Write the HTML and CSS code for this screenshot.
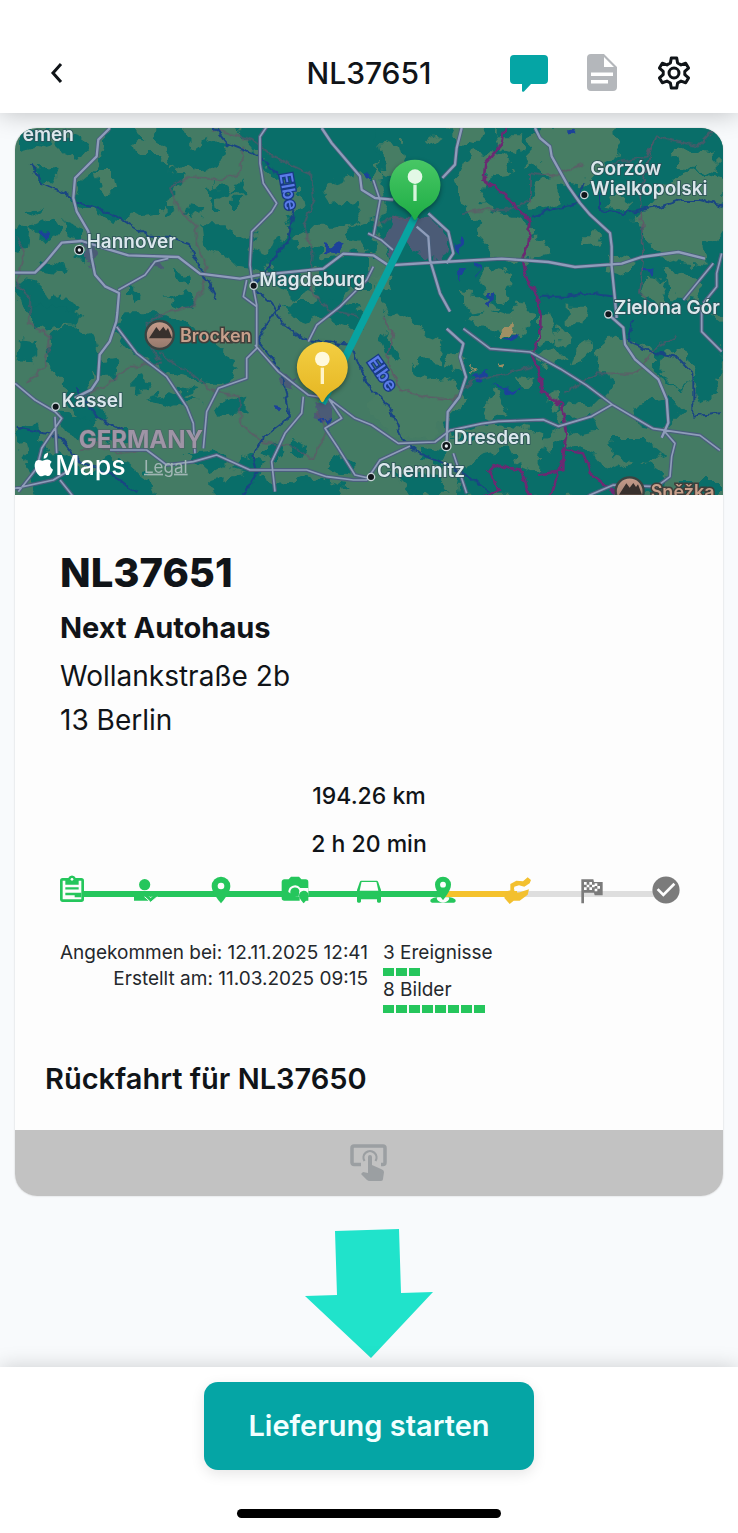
FILE: index.html
```html
<!DOCTYPE html>
<html lang="de">
<head>
<meta charset="utf-8">
<meta name="viewport" content="width=device-width, initial-scale=1">
<title>NL37651</title>
<link rel="stylesheet" href="styles.css">
</head>
<body>
<header class="topbar">
  <button class="icon-button" type="button" aria-label="Zurück">
    <svg width="20" height="24" viewBox="0 0 20 24"><path class="chevron" d="M15 3 7 12l8 9"/></svg>
  </button>
  <p class="topbar-title">NL37651</p>
  <div class="topbar-actions">
    <button class="icon-button" type="button" aria-label="Nachrichten">
      <svg width="38" height="38" viewBox="0 0 38 38"><path fill="#05a5a5" d="M4 1h30a4 4 0 0 1 4 4v21a4 4 0 0 1-4 4h-13l-7 7.500q-2 1-2-1V30H4a4 4 0 0 1-4-4V5a4 4 0 0 1 4-4z"/></svg>
    </button>
    <button class="icon-button" type="button" aria-label="Dokument">
      <svg width="30" height="38" viewBox="0 0 30 38"><path fill="#b4b7bb" fill-rule="evenodd" d="M4 0h13l13 13v20a4 4 0 0 1-4 4H4a4 4 0 0 1-4-4V4a4 4 0 0 1 4-4zm13 3v10h10zM4 18.500v3.500h22v-3.500zM4 26v3.500h17V26z"/></svg>
    </button>
    <button class="icon-button" type="button" aria-label="Einstellungen">
      <svg width="36" height="36" viewBox="0 0 24 24"><path class="gear" d="M10.200 2h3.600l.6 3.300 2.300 1.300 3.100-1.100 1.900 3.200-2.500 2.200v2.200l2.500 2.200-1.900 3.200-3.100-1.100-2.300 1.300-.6 3.300h-3.600l-.6-3.300-2.300-1.300-3.100 1.100-1.900-3.200 2.500-2.200v-2.200L2.300 8.700l1.900-3.200 3.100 1.100 2.300-1.300z"/><circle class="gear" cx="12" cy="12" r="3.300"/></svg>
    </button>
  </div>
</header>

<main class="content">
  <article class="card">
    <svg class="map" viewBox="45 24 2124 1101" preserveAspectRatio="xMidYMid slice" role="img" aria-label="Karte der Route">
      <defs>
        <filter id="ragged" x="0" y="0" width="100%" height="100%" color-interpolation-filters="sRGB">
          <feTurbulence type="fractalNoise" baseFrequency="0.03" numOctaves="2" seed="4" result="n"/>
          <feDisplacementMap in="SourceGraphic" in2="n" scale="50" xChannelSelector="R" yChannelSelector="G"/>
        </filter>
        <filter id="wavy" x="0" y="0" width="100%" height="100%" color-interpolation-filters="sRGB">
          <feTurbulence type="fractalNoise" baseFrequency="0.04" numOctaves="2" seed="9" result="n"/>
          <feDisplacementMap in="SourceGraphic" in2="n" scale="22" xChannelSelector="R" yChannelSelector="G"/>
        </filter>
        <linearGradient id="pinGreen" x1="0" y1="0" x2="0" y2="1"><stop offset="0" stop-color="#48c765"/><stop offset="1" stop-color="#1ead45"/></linearGradient>
        <linearGradient id="pinYellow" x1="0" y1="0" x2="0" y2="1"><stop offset="0" stop-color="#f3ce42"/><stop offset="1" stop-color="#e5b622"/></linearGradient>
        <linearGradient id="peak" x1="0" y1="0" x2="0" y2="1"><stop offset="0" stop-color="#c69c8b"/><stop offset="1" stop-color="#94786b"/></linearGradient>
        <path id="motorways" d="M330 24l-35 35-5 50-65 65-5 60 10 40 35 60 10 80 10 50 30 35 42 20-5 60-3 25-20 60-30 40-5 75-20 30-50 25M45 458l60 0 30-30 50-60 60-5 80 25 60 18 150 5 65 50 120 15 50-10 200-20 60-45 90 5 45 30 160-10 180-10 140 10 80 15 140-10 60-20 110-15 80 20M965 24l30 45 85 100 5 40 40 25 55 5M1385 24l-15 60-5 50-38 40M1605 24l15 30 30 25 5 30 50 90 35 50 30 35 60 55 5 40 0 60 10 100 5 55M1825 583l45 40 5 50 30 45 70 60 25 60 5 70-20 45M1285 280l60 55 15 65-20 30M1250 320l35 30 5 70 30 100 30 55M1340 626l50 45-10 40 18 60-20 60-35 45-3 90"/>
        <path id="highways" d="M1390 626l80 60 120 10 90 50 80 50 80 60 120 70 140 20 60 45M350 620l60 80 90 70 60 90 20 50 5 90M610 985l10-110 35-70 85-30 0-60 30-30 0-130-15-80-5-40 5-100 60-60 15-25-40-60-10-60 0-80 30-45-30-60M765 675l70 80 90 70 60 10 80 60 50 20 80 55 110-4 45-35 95-20 50-7 135-5 45 20 100-30 60-35M985 835l40 60-50 30 40 60 50 80 45 10M910 830l-5 50-50 60-40 85 10 90M330 990l110 0 60 45 80-10 70-20 100 45 170 0 60 20 80 10 40 0 40-60 90-42M45 790l60 50 60 35 20 20-60 90-15 60-55 70M165 890l5 110M45 1105l115-25 50-30M180 1080l40 50M355 510l80-45 30-40 40-10M740 480l-10 50 40 30M1360 1000l20 60 20 60M1990 930l35 40-10 40-5 60-40 30-130-5-70 30-40 30-10 30M2165 400l-15 60 0 40-40 50M2105 555l0 80 60 60M925 665l25-50 70-55 80-80 20-40M1104 340l40 20 35 30M1120 180l20 60-20 110M2140 430l-90 110"/>
      </defs>
      <rect x="-20" y="-20" width="2300" height="1240" fill="#447b64"/>
      <g filter="url(#ragged)">
        <g fill="#096e69">
          <path d="M345 0 315 60l-20 80-60 50-15 70 60 0 60 50 60-25 80-10 30-30 20-50 30-20-60-40-30-30-60 0-10-30 30-20-50-50 10-45zM480 20l60 0 40 60 60-20 40 20-20 50-50 30-50-20-50 20-10-80-50-30zM60 30l90 0-10 40-80 20zM170 30l60 20 40 30-30 40-50-20-30-30zM110 140l60 10-10 30-40 10z"/>
          <path d="M690 0l700 0 0 150-200-20-60 60-60-30-60 20-50 40-50-20-80-10-60-90z"/>
          <path d="M900 160l50 30 40 60 80-10 20 60-80 20-70 0-60 30-20-60 50-30-10-50zM610 220l60-30 20 30-40 20zM640 180l20 90-20 0zM690 230l40 0-10 40-30 0zM570 250l40 10-10 30-40-10zM720 180l20 40-50 0zM610 310l60 0 40 40 60-10-20 50 60 20-20 40-80-10-30-30-60-20zM500 250l30 20-30 20z"/>
          <path d="M830 360l50-30 20 50 60 0 20 50-60 20-40 40 60 20-50 30-70-50-20-60zM1040 320l90-20 0 100-50-20zM960 420l150-30 0 120-60 0-60 60-50-50z"/>
          <path d="M50 310l40 10-10 60-40 10zM90 320l70-30 15 50-40 30zM80 280l50-20-30 30zM190 300l50 20 20 50-60-20zM230 380l40 20-10 30-30-20zM120 420l80 20-10 20-60-10zM50 480l60 10 40 50 30-20 60 40-30 40-70-40-60 20-20-40zM510 440l60 30-10 30-40-20zM390 490l30 30-10 30-20-30z"/>
          <path d="M70 560l120 0 60 30-40 30-50-10-50 20zM60 660l60 10-20 60-50-10zM150 630l80-10 50 40 20 70-40 60 20 60 40 30-60 40-50-60-20-70-50-60z"/>
          <path d="M380 580l110 0 100 50 70 40 50 80-20 40-100-10-90-20-70-50-60-20-30-60zM500 530l60-20 40 40-60 20zM400 780l30-10 20 40-50 10zM430 840l80-20 90 20-80 20zM530 800l60 10-50 20zM650 850l90-20 0 50-80 10zM290 720l60-10-10 60-50 0z"/>
          <path d="M50 920l60 0 30 80 50 0 60 60 80-50 60 20 60 50 20 70-360 0zM170 880l80 10 60 40 90 0-20 40-80-10-40 10-60-30zM560 1000l90-10 40 40-60 30zM720 1000l80 20-30 50-70-20zM630 1080l120-20 80 30 80-20 130 30-20 40-380 0zM810 970l50 20-30 30-50-20zM840 550l120-10 100 10 40 60-40 20-100-40-60 20zM880 960l50 20-20 40-40-20zM1000 1000l70 30-30 30-60-20z"/>
          <path d="M1110 0h1100v580l-180 0-130 80-90 50 30 90-60 60-90-10-30 100-80 20-100-30-60 20-70-10-20-50-60 10-30-50-50-60 40-30-60-50-30-60 40-60-60-100 50-70-40-100 30-80z"/>
          <path d="M1860 640l100-80 140 0 80 60-20 150-70-30-40 80-90-70zM1900 860l110-30 40 40-60 60-70-10zM1680 900l100-10 20 40-90 20zM1460 1000l170-30 30 80-30 80-260 0 10-80zM1660 960l130 40 40 50 90-30 80 50-20 60-400 0 20-80zM1830 960l110 0 50 40-70 30-80-20zM1270 980l80 10-20 50-70-20zM1170 1060l120-10 60 70-100 10zM2050 720l100 40 10 60-60 30zM2040 1080l120 0 0 50-130 0z"/>
        </g>
        <g fill="#477d64">
          <path d="M290 150l40 0 10 60-30 10zM1140 60l60 10 20 70 0 60-70-40zM1280 40l40 20-30 20zM1340 10l120 0-20 50-60 20zM1420 90l100 20 20 50-80 10-20 70 60 50-60 20-50-50-20-80zM1620 20l220 0 20 80-50 30-60 70-90-10-50-60-30 10 0-60zM1480 40l90 0-10 60-60-10z"/>
          <path d="M1450 260l110 30 50 40-30 100-90-10-60-80zM1610 180l60-10 10 80-90 20zM1980 200l90-50 100 30 0 160-60 30 10 70-90-10-60-40-70-90 60-50zM1830 220l70 20-30 30-50-10zM1750 340l60 0-10 30-50 10zM1560 350l70 0 20 50-80 20zM1450 440l90 20-20 90-70-40zM1380 520l90 20 30 30-90 10zM1130 470l60-10-20 50-50 10zM1130 130l30 50-50 10zM2000 450l110 30-20 60-80-10zM1830 410l80 20-30 40-60-20zM1930 470l70 10-20 70-60-20zM2020 80l130 20 0 60-110-20z"/>
          <path d="M1160 600l60-20 60 60-20 100-60-30-40-60zM1250 640l80 30-10 60-60-10zM1130 700l100 20 40 60 80-10 50 70-60 60-60 70-100-20-70-80zM1400 600l60-30 60 20 40-50 40 50-40 60-80-20zM1620 580l30 0 20 80-50 10zM1670 620l50 30-20 30-40-10zM1720 700l50-40-10 60-50 10zM1780 700l60-50 80 20 50 50-50 40-120 0zM1550 770l60 10-40 30zM1440 860l50-50 30 70-50 30zM1590 700l80-20 30 40-60 20zM1350 700l50 10-20 40-50-10zM1990 700l60-20 40 80-50 50-60-60z"/>
          <path d="M1330 950l100-40 110 10 90 20-10 110-70-20-30-60-100-30zM1700 560l60 0-10 50-50 0zM1640 830l30-20 10 60-30 10z"/>
        </g>
        <path fill="#a09064" d="M1508 628l22-14 5-12 10 18-8 22-25 12zM1490 728l8 8 14-4-2 16-20-2zM1408 745l15 0-6 14z"/>
        <path fill="#4b5b76" d="M1180 290l100 0 70 70-20 60-60-10-60-40-40 50-20-60zM255 370l35 30-15 40-25-30zM845 770l40 0-10 45-30-10zM940 840l50 10 0 60-40-10zM450 420l35 0-10 30-25-5z"/>
        <path fill="#1c429a" d="M115 345l35-15-10 30zM975 370l50 5-15 25-35-5zM1370 360l18-5-6 50-12-10zM1090 140l20 40-20-10zM1375 450l20 0-8 30zM1425 430l12 0-6 40zM1465 510l10 0-6 50-8-5zM815 855l40 5-20 15zM1525 650l25-8-6 25zM1410 770l60-15-15 25zM1480 795l80 15-10 15zM960 890l30 5-10 50zM1940 450l15 0-5 15zM1700 30l30 10-10 8z"/>
      </g>

      <g class="district" filter="url(#wavy)">
        <path d="M730 80l-10 80-60 20-90-10-60 30 20 60 60 60 0 60 30 60-10 60-30 60-90 20-50 30 0 50 40 60"/>
        <path d="M640 30l120 30 60 50 110 50 10 80-30 80 30 70-10 120 60 60 90 20"/>
        <path d="M50 350l20 50-20 100 40 30 0 80 60 40-10 80-60 60M480 700l90 60 60 50 90 20 0 80 70 60 90 10 60 40 40-90-30-60M480 730l-90 10-60 50-80 40"/>
        <path d="M1840 130l100-20 30-60 120 30 60-60M1380 280l80-10 70 0 60-30 0-80 70 10 90-40M1960 70l-40 140 10 200-10 110 50 40M1150 590l30 60-20 70 40 90 80 20 80 10 60-60 100-20 80-20M1690 820l100-60 120 0 60-80 60-30"/>
        <path d="M240 990l60-20 50 30 90-10M1120 320l60-30 70 20"/>
      </g>
      <g class="border" filter="url(#wavy)">
        <path d="M1516 20l-10 50-50 60-5 50 60 40 45 50 35 35-5 60-20 60 15 50 30 50 10 60 0 60-25 60 25 60 5 50 60 40 15 100-20 80-30 90-25 20-40-20-20-70-60-20-40 15 30 60-50 20-70 30-100 30"/>
        <path d="M1620 1060l70-10 0-60 60 10 20 60 40 30 40 30"/>
      </g>
      <g class="river" filter="url(#wavy)">
        <path d="M95 130l30 60 70 30 40 30 70 20 60 30 80 50 60 0 60 20 40 80 45 90M640 20l40 50 100 40 60 60 40 100-15 90-50 60-30 50-30 30 60 50 40 70 60 40 140 15 20 60 30 60 40 40 40 60 20 60 60 50 80 30 60 30 60 50"/>
        <path d="M770 660l50 60 30 60 20 110-80 60-30 50 10 60-50 80M840 555l-40 60-30 50M50 920l80 20 50 10 60 80 90 30 80 60M230 800l60 90 80 40"/>
        <path d="M1590 290l60-20 80-20 20-60M1800 220l0 50 70 10 110-20 60-20 60 0 80 20M1620 530l80 0 60-10 90 10M1900 600l-20 60 90 40 60 10 50 50 0 130 80-10"/>
      </g>
      <g class="casing"><use href="#motorways"/><use href="#highways"/></g>
      <g class="road"><use href="#motorways"/><use href="#highways" class="minor"/></g>

      <path d="M1245 290 967 850" stroke="#08a3a1" stroke-width="22" fill="none"/>

      <g class="city-dots">
        <circle cx="238" cy="390" r="14"/><circle cx="761" cy="497" r="11"/><circle cx="167" cy="860" r="11"/>
        <circle cx="1753" cy="225" r="11"/><circle cx="1825" cy="583" r="11"/><circle cx="1339" cy="978" r="14"/><circle cx="1113" cy="1071" r="11"/>
      </g>
      <circle cx="238" cy="390" r="5" fill="#eaf0f3"/><circle cx="1339" cy="978" r="5" fill="#eaf0f3"/>

      <g class="summit">
        <circle cx="479" cy="645" r="42"/><path d="M447 655l22-34 10 13 11-14 8 12 6-8 12 31z"/>
        <circle cx="1889" cy="1114" r="42"/><path d="M1857 1124l22-34 10 13 11-14 8 12 6-8 12 31z"/>
      </g>
      <g class="labels">
        <text x="68" y="62">emen</text>
        <text x="260" y="385">Hannover</text>
        <text x="778" y="497">Magdeburg</text>
        <text x="185" y="860">Kassel</text>
        <text x="1771" y="165">Gorzów</text>
        <text x="1771" y="225">Wielkopolski</text>
        <text x="1842" y="583">Zielona Gór</text>
        <text x="1361" y="971">Dresden</text>
        <text x="1131" y="1070">Chemnitz</text>
      </g>
      <g class="labels summit-labels"><text x="540" y="667">Brocken</text><text x="1952" y="1133">Sněžka</text></g>
      <text class="country" x="236" y="985">GERMANY</text>
      <g class="labels water-labels"><text transform="translate(838 162) rotate(80)">Elbe</text><text transform="translate(1100 725) rotate(55)">Elbe</text></g>

      <g class="pin">
        <path fill="url(#pinGreen)" d="M1245 119a76 76 0 0 1 38 142q-24 14-34 36-4 6-8 0-10-22-34-36a76 76 0 0 1 38-142z"/>
        <circle cx="1245" cy="170" r="22" fill="#e3f8e6"/><path d="M1245 194v49" stroke="#d6f4dc" stroke-width="10"/>
        <path fill="url(#pinYellow)" d="M967 666a76 76 0 0 1 38 142q-24 14-34 36-4 6-8 0-10-22-34-36a76 76 0 0 1 38-142z"/>
        <circle cx="967" cy="717" r="22" fill="#fff9dc"/><path d="M967 743v49" stroke="#fff4c8" stroke-width="10"/>
      </g>
      <path fill="#fff" d="M144 998q-14 2-13 18 14-1 13-18zm11 27q-10-11-23-4-5 2-10 0-18-6-18 18 2 20 15 29 5 2 11-1t12 1q10 2 17-19-15-12-4-24z"/>
      <text class="brand" x="166" y="1065">Maps</text>
      <a href="#legal"><text class="legal" x="432" y="1058">Legal</text></a>
    </svg>

    <div class="card-body">
      <section class="address">
        <h1 class="order-number">NL37651</h1>
        <h2 class="customer">Next Autohaus</h2>
        <p class="address-line">Wollankstraße 2b</p>
        <p class="address-line">13 Berlin</p>
      </section>

      <div class="trip">
        <p>194.26 km</p>
        <p>2 h 20 min</p>
      </div>

      <ol class="timeline">
        <li class="step done"><svg viewBox="0 0 24 24"><path d="M19 3h-4.200a3 3 0 0 0-5.600 0H5a2 2 0 0 0-2 2v14c0 1.100.9 2 2 2h14a2 2 0 0 0 2-2V5a2 2 0 0 0-2-2z"/><path fill="#fdfdfd" d="M5 5h2v3h10V5h2v14H5z"/><circle fill="#fdfdfd" cx="12" cy="4" r="1"/><path d="M7 10h10v1.700H7zm0 4h12v3.500h-5V16H7z"/></svg></li>
        <li class="step done"><svg viewBox="0 0 24 24"><circle cx="11" cy="8" r="4.200"/><path d="M3 16.500h7l4 3.500H3z"/><path stroke="#fdfdfd" stroke-width=".7" d="m10.500 16.500 2-1.400 3 2.500 3-2.500 2.500 1.400-5.500 4.700z"/><path d="M3 13h18v4H3z"/></svg></li>
        <li class="step done"><svg viewBox="0 0 24 24"><path d="M12 2a7 7 0 0 0-7 7c0 5.250 7 13 7 13s7-7.750 7-13a7 7 0 0 0-7-7z"/><circle fill="#fdfdfd" cx="12" cy="9" r="2.500"/></svg></li>
        <li class="step done"><svg viewBox="0 0 24 24"><path d="M9 2h6l1.800 2H20a2 2 0 0 1 2 2v14H4a2 2 0 0 1-2-2V6c0-1.100.9-2 2-2h3.200z"/><path fill="#fdfdfd" d="M7 13.500a5 5 0 0 1 9-3h6v5c0 2-3 5-3 5h-3.500V17H13z"/><path d="M8.500 13.200a3.500 3.500 0 0 1 6.800-.7l-.6 4.500H8.500zM18.500 12.500a3.700 3.700 0 0 0-3.500 3.700c0 2.300 3.500 5.800 3.500 5.800s3.700-3.500 3.700-5.800a3.700 3.700 0 0 0-3.700-3.700z"/></svg></li>
        <li class="step done"><svg viewBox="0 0 24 24"><path d="M18.900 6c-.2-.6-.8-1-1.400-1h-11c-.7 0-1.200.4-1.400 1L3 12v8.500c0 .6.400 1 1 1h1c.6 0 1-.4 1-1V19h12v1.500c0 .6.400 1 1 1h1c.6 0 1-.4 1-1V12z"/><path fill="#fdfdfd" d="M5 12.500 6.400 6h11.200l1.400 6.500z"/></svg></li>
        <li class="step done last-done"><svg viewBox="0 0 24 24"><path d="M7 17.500c-3 .5-4.500 1.500-4.500 2.500s1 1.500 2 1.500h15c1 0 2-.5 2-1.500s-1.500-2-4.500-2.500z"/><path fill="#fdfdfd" d="M8 17.500c-2 1 1 4 4 4s6-3 4-4z"/><path d="M12 2a6 6 0 0 0-6 6c0 4.500 6 11.500 6 11.500s6-7 6-11.500a6 6 0 0 0-6-6z"/><circle fill="#fdfdfd" cx="12" cy="8" r="2.200"/></svg></li>
        <li class="step current"><svg viewBox="0 0 24 24"><path d="M7 7.500 11.500 5l5 .5L20 2.500l2.500 2-1 2.500-4 2.500-4-1-3.500 1-.5 3H7z"/><path d="M10 11.500v2.300h3.500l7.500-2.300-1 4-6 4.500H9.500l-3 2.500L2.500 18 4 13z"/></svg></li>
        <li class="step open"><svg viewBox="0 0 24 24"><path d="M4 4h9l.5 2H20v10h-6l-.5-2H6v8H4z"/><path fill="#fdfdfd" d="M6 6h2v2H6zm4 0h2v2h-2zM8 8h2v2H8zm4 0h2v2h-2zm-6 2h2v2H6zm4 0h2v2h-2zm4-3h2v2h-2zm2 2h2v2h-2zm-2 2h2v2h-2z"/></svg></li>
        <li class="step open"><svg viewBox="0 0 24 24"><circle cx="12" cy="12" r="10.200"/><path fill="#fdfdfd" d="m10 17-5-5 1.400-1.400 3.600 3.600 7.600-7.600L19 8z"/></svg></li>
      </ol>

      <div class="facts">
        <div class="dates">
          <p>Angekommen bei: 12.11.2025 12:41</p>
          <p>Erstellt am: 11.03.2025 09:15</p>
        </div>
        <div class="counts">
          <p>3 Ereignisse</p>
          <div class="ticks"><i></i><i></i><i></i></div>
          <p>8 Bilder</p>
          <div class="ticks"><i></i><i></i><i></i><i></i><i></i><i></i><i></i><i></i></div>
        </div>
      </div>

      <p class="return-trip">Rückfahrt für NL37650</p>
    </div>

    <button class="tap-bar" type="button" aria-label="Auftrag öffnen">
      <svg width="38" height="38" viewBox="0 0 38 38"><path d="M11 20.500H4a2 2 0 0 1-2-2V4a2 2 0 0 1 2-2h29a2 2 0 0 1 2 2v14.500a2 2 0 0 1-2 2h-2" fill="none" stroke="#9b9fa2" stroke-width="3.500"/><path d="M14.500 17a6.500 6.500 0 1 1 11 0" fill="none" stroke="#9b9fa2" stroke-width="2.200"/><path fill="#9b9fa2" d="M18 13a2 2 0 0 1 4 0v8l9 4q3 1 3 3l-1 7q0 2-2 2H20q-2 0-3-1l-6-6 2-2 5 1z"/></svg>
    </button>
  </article>

  <svg class="arrow" width="128" height="129" viewBox="0 0 128 129" aria-hidden="true"><path fill="#20e3cb" d="M30 2 94 0l2 64 32-1-62 66L0 67l32-1z"/></svg>
</main>

<footer class="bottom-bar">
  <button class="primary" type="button">Lieferung starten</button>
  <div class="home-indicator"></div>
</footer>
</body>
</html>
```
FILE: styles.css
```css
* { box-sizing: border-box; }
body {
  margin: 0;
  min-height: 100vh;
  display: flex;
  flex-direction: column;
  background: #f8fafc;
  color: #101418;
  font-family: Inter, "Liberation Sans", sans-serif;
}
h1, h2, p, ol { margin: 0; padding: 0; }
button { border: 0; padding: 0; background: none; font: inherit; color: inherit; }
svg { display: block; }

.topbar {
  display: grid;
  grid-template-columns: 1fr auto 1fr;
  align-items: center;
  padding: 48px 46px 15px;
  background: #fff;
  box-shadow: 0 0 24px rgba(0, 0, 0, .25);
}
.topbar .icon-button { justify-self: start; }
.topbar-title { font-size: 30px; font-weight: 500; line-height: 50px; }
.topbar-actions { display: flex; align-items: center; justify-content: flex-end; gap: 39px; }
.chevron { fill: none; stroke: #101418; stroke-width: 3; }
.gear { fill: none; stroke: #101418; stroke-width: 2; stroke-linejoin: round; }

.content { flex: 1; display: flex; flex-direction: column; align-items: center; gap: 33px; padding: 15px 15px 8px; }
.card {
  width: 100%;
  overflow: hidden;
  border-radius: 22px;
  background: #fdfdfd;
  box-shadow: 0 0 2px rgba(0, 0, 0, .2);
}
.map { width: 100%; height: auto; aspect-ratio: 708 / 367; }
.district path { fill: none; stroke: #665269; stroke-width: 5; opacity: .75; }
.border path { fill: none; stroke: #6b2a72; stroke-width: 8; }
.river path { fill: none; stroke: #194583; stroke-width: 6; }
.casing { fill: none; stroke: #4a5f7c; stroke-width: 12; stroke-linejoin: round; }
.road { fill: none; stroke: #8f9dba; stroke-width: 7; stroke-linejoin: round; }
.minor { stroke-width: 5; }
.city-dots circle { fill: #10161b; stroke: #c7d4d8; stroke-width: 4; }
.labels text {
  font-size: 57px;
  font-weight: 600;
  fill: #dbe8ec;
  stroke: #2d5158;
  stroke-width: 5;
  paint-order: stroke;
}
.summit circle { fill: url(#peak); stroke: #3b4442; stroke-width: 7; }
.summit path { fill: #38302d; }
.labels.summit-labels text { font-size: 54px; fill: #c8a08c; stroke: #403f3b; stroke-width: 9; }
.labels.water-labels text { font-size: 54px; fill: #5a7be8; stroke: #183a86; stroke-width: 8; }
.country { font-size: 72px; font-weight: 700; fill: #9f94a6; stroke: #4c6667; stroke-width: 4; paint-order: stroke; }
.brand { font-size: 80px; font-weight: 500; fill: #fff; }
.legal { font-size: 51px; fill: #a0b6b4; text-decoration: underline; }
.pin { filter: drop-shadow(0 6px 8px rgba(0, 0, 0, .4)); }

.card-body { padding: 52px 20px 32px; }
.address { padding: 0 25px; }
.order-number { font-size: 40px; font-weight: 800; line-height: 52px; }
.customer { margin-top: 7px; margin-bottom: 4px; font-size: 29px; font-weight: 700; line-height: 44px; }
.address-line { font-size: 28px; line-height: 44px; }
.trip { margin-top: 30px; text-align: center; font-size: 23px; font-weight: 500; line-height: 48px; }

.timeline { display: flex; margin-top: 6px; list-style: none; }
.step { position: relative; flex: 1; display: flex; justify-content: center; color: #25c65c; }
.step svg { position: relative; width: 32px; height: 32px; fill: currentColor; }
.step::before {
  content: "";
  position: absolute;
  left: 50%;
  top: 17px;
  width: 100%;
  height: 6px;
  background: #25c65c;
}
.step.last-done::before { background: #f5c22d; }
.current { color: #f3c02f; }
.current::before, .open::before { background: #dedede; }
.open { color: #7b7b7b; }
.step:last-child::before { display: none; }

.facts { display: grid; grid-template-columns: 333px 1fr; gap: 15px; margin-top: 34px; font-size: 19px; line-height: 26px; color: #24282c; }
.dates { text-align: right; white-space: nowrap; }
.ticks { display: flex; gap: 2px; padding: 2px 0 1px; }
.ticks i { width: 11px; height: 8px; background: #25c65c; }
.return-trip { margin-top: 46px; padding: 0 10px; font-size: 29px; font-weight: 600; line-height: 38px; }
.tap-bar { display: flex; justify-content: center; align-items: center; width: 100%; height: 66px; background: #c2c2c2; }

.bottom-bar {
  display: flex;
  flex-direction: column;
  align-items: center;
  gap: 39px;
  padding: 15px;
  background: #fff;
  box-shadow: 0 0 20px rgba(0, 0, 0, .18);
}
.primary {
  padding: 22px 44px;
  border-radius: 14px;
  background: #05a5a5;
  color: #f2ffff;
  font-size: 29px;
  font-weight: 600;
  line-height: 44px;
  box-shadow: 0 4px 14px rgba(0, 0, 0, .1);
}
.home-indicator { width: 264px; height: 9px; border-radius: 5px; background: #000; }
```
